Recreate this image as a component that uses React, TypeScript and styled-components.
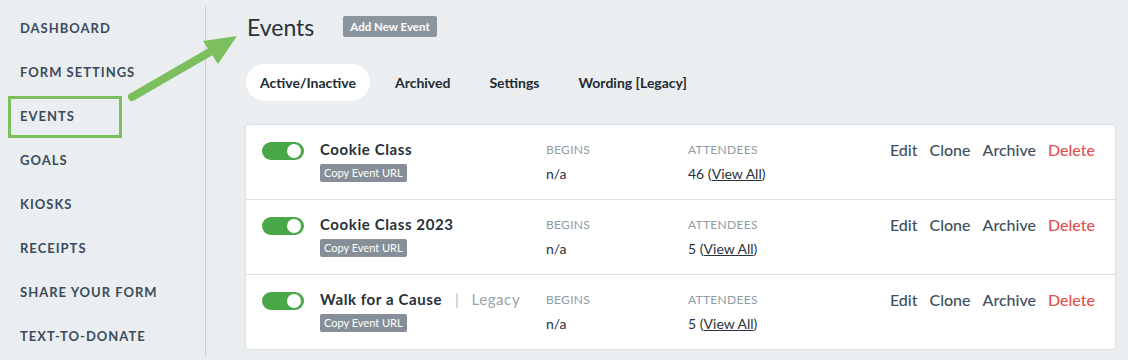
import React from 'react';
import styled, { createGlobalStyle } from 'styled-components';

const GlobalStyle = createGlobalStyle`
  html, body {
    margin: 0;
    padding: 0;
    background: #ebeef0;
    font-family: 'Lato', 'Liberation Sans', sans-serif;
    color: #2b3540;
  }
  *, *::before, *::after { box-sizing: border-box; }
`;

const navItems = [
  'DASHBOARD',
  'FORM SETTINGS',
  'EVENTS',
  'GOALS',
  'KIOSKS',
  'RECEIPTS',
  'SHARE YOUR FORM',
  'TEXT-TO-DONATE',
];

const tabs = ['Active/Inactive', 'Archived', 'Settings', 'Wording [Legacy]'];

type EventRow = { name: string; legacy?: boolean; attendees: number };

const events: EventRow[] = [
  { name: 'Cookie Class', attendees: 46 },
  { name: 'Cookie Class 2023', attendees: 5 },
  { name: 'Walk for a Cause', legacy: true, attendees: 5 },
];

const App = () => {
  return (
    <Page>
      <GlobalStyle />
      <Sidebar>
        {navItems.map((item) => (
          <NavItem key={item} $highlighted={item === 'EVENTS'}>
            {item}
          </NavItem>
        ))}
      </Sidebar>
      <Main>
        <Header>
          <Title>Events</Title>
          <SmallButton>Add New Event</SmallButton>
        </Header>
        <Tabs>
          {tabs.map((tab, i) => (
            <Tab key={tab} $active={i === 0}>
              {tab}
            </Tab>
          ))}
        </Tabs>
        <Card>
          {events.map((ev) => (
            <Row key={ev.name}>
              <Toggle>
                <Knob />
              </Toggle>
              <NameCol>
                <Name>
                  {ev.name}
                  {ev.legacy && (
                    <>
                      <Pipe>|</Pipe>
                      <Legacy>Legacy</Legacy>
                    </>
                  )}
                </Name>
                <Badge>Copy Event URL</Badge>
              </NameCol>
              <InfoCol>
                <Label>BEGINS</Label>
                <Value>n/a</Value>
              </InfoCol>
              <InfoCol>
                <Label>ATTENDEES</Label>
                <Value>
                  {ev.attendees} (<Link>View All</Link>)
                </Value>
              </InfoCol>
              <Actions>
                <Action>Edit</Action>
                <Action>Clone</Action>
                <Action>Archive</Action>
                <Action $danger>Delete</Action>
              </Actions>
            </Row>
          ))}
        </Card>
      </Main>
      <Arrow width="120" height="80" viewBox="0 0 120 80">
        <line x1="10" y1="73" x2="88" y2="28" stroke="#7bbf5e" strokeWidth="8" strokeLinecap="round" />
        <polygon points="115,12 81,17 96,40" fill="#7bbf5e" />
      </Arrow>
    </Page>
  );
};

const Page = styled.div`
  position: relative;
  display: flex;
  width: 1128px;
  height: 360px;
  overflow: hidden;
`;

const Sidebar = styled.nav`
  width: 206px;
  flex-shrink: 0;
  margin-top: 6px;
  height: 351px;
  border-right: 1px solid #c9ced1;
`;

const NavItem = styled.div<{ $highlighted?: boolean }>`
  position: relative;
  height: 44px;
  display: flex;
  align-items: center;
  padding-left: 20px;
  font-size: 13px;
  font-weight: 700;
  letter-spacing: 1px;
  color: #3a4b5c;

  &::after {
    content: '';
    display: ${(p) => (p.$highlighted ? 'block' : 'none')};
    position: absolute;
    left: 8px;
    top: 2px;
    width: 114px;
    height: 42px;
    border: 3px solid #7bbf5e;
  }
`;

const Main = styled.main`
  flex: 1;
  padding: 13px 13px 0 40px;
`;

const Header = styled.div`
  display: flex;
  align-items: center;
  gap: 29px;
  height: 28px;
`;

const Title = styled.h1`
  margin: 0;
  font-size: 23px;
  font-weight: 400;
  color: #27313b;
  padding-left: 1px;
`;

const SmallButton = styled.button`
  border: none;
  background: #8a959d;
  color: #fff;
  font-family: inherit;
  font-size: 11.5px;
  font-weight: 700;
  height: 21px;
  padding: 0 7px;
  border-radius: 2px;
  margin-top: -2px;
`;

const Tabs = styled.div`
  display: flex;
  gap: 11px;
  margin-top: 23px;
`;

const Tab = styled.div<{ $active?: boolean }>`
  height: 37px;
  display: flex;
  align-items: center;
  padding: 0 14px;
  border-radius: 19px;
  font-size: 14px;
  font-weight: 700;
  color: #222b33;
  background: ${(p) => (p.$active ? '#fff' : 'transparent')};
`;

const Card = styled.div`
  margin-top: 24px;
  background: #fff;
  border-radius: 3px;
  box-shadow: 0 0 2px rgba(0, 0, 0, 0.18);
`;

const Row = styled.div`
  display: grid;
  grid-template-columns: 58px 226px 142px 1fr auto;
  height: 75px;
  padding: 17px 20px 0 16px;
  border-bottom: 1px solid #dcdfe1;

  &:last-child {
    border-bottom: none;
    height: 74px;
  }
`;

const Toggle = styled.div`
  width: 42px;
  height: 18px;
  border-radius: 9px;
  background: #49a748;
  position: relative;
`;

const Knob = styled.div`
  position: absolute;
  right: 3px;
  top: 2px;
  width: 14px;
  height: 14px;
  border-radius: 50%;
  background: #fff;
`;

const NameCol = styled.div`
  display: flex;
  flex-direction: column;
  align-items: flex-start;
  gap: 6px;
  margin-top: -2px;
`;

const Name = styled.div`
  font-size: 15px;
  font-weight: 700;
  color: #25303a;
  height: 18px;
  line-height: 18px;
  letter-spacing: 0.6px;
`;

const Pipe = styled.span`
  color: #a9c0d2;
  font-weight: 400;
  margin: 0 12px 0 13px;
`;

const Legacy = styled.span`
  color: #98a4ac;
  font-weight: 400;
`;

const Badge = styled.span`
  background: #868f97;
  color: #fff;
  font-size: 11px;
  height: 18px;
  line-height: 18px;
  padding: 0 4px;
  border-radius: 2px;
`;

const InfoCol = styled.div`
  display: flex;
  flex-direction: column;
  gap: 8px;
`;

const Label = styled.div`
  font-size: 12px;
  color: #8f9ca5;
  letter-spacing: 0.3px;
`;

const Value = styled.div`
  font-size: 14px;
  color: #2a333c;
`;

const Link = styled.span`
  text-decoration: underline;
`;

const Actions = styled.div`
  display: flex;
  gap: 12px;
  height: 18px;
  align-items: center;
  margin-top: -2px;
`;

const Action = styled.span<{ $danger?: boolean }>`
  font-size: 16px;
  font-weight: 500;
  color: ${(p) => (p.$danger ? '#e2514f' : '#3e4f60')};
`;

const Arrow = styled.svg`
  position: absolute;
  left: 122px;
  top: 24px;
  pointer-events: none;
`;

export default App;
